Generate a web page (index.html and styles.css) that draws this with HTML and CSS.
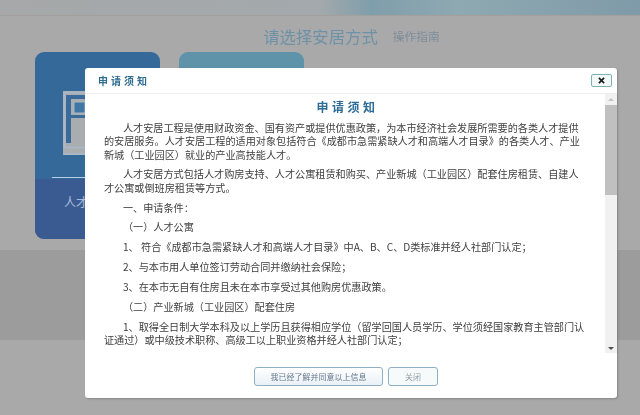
FILE: index.html
```html
<!DOCTYPE html>
<html lang="zh-CN">
<head>
<meta charset="utf-8">
<title>申请须知</title>
<link rel="stylesheet" href="styles.css">
</head>
<body>
<div class="page">
  <div class="banner"></div>
  <div class="heading">
    <h1 class="heading-title">请选择安居方式</h1>
    <a class="heading-link">操作指南</a>
  </div>
  <div class="cards">
    <div class="card card-primary">
      <div class="card-top">
        <svg class="card-icon" viewBox="0 0 62 64" aria-hidden="true">
          <path class="icon-line" d="M1.5 56V1.5H62M1 56.5H62M1 63H62" />
          <rect class="icon-dark" x="3" y="4" width="5" height="48"/>
          <rect class="icon-dark" x="3" y="4" width="59" height="4"/>
          <rect class="icon-dark" x="8" y="24" width="54" height="3"/>
          <rect class="icon-window" x="11" y="11" width="11" height="11"/>
        </svg>
        <span class="card-rule"></span>
      </div>
      <div class="card-foot">人才公寓</div>
    </div>
    <div class="card card-secondary"></div>
  </div>
  <div class="band"></div>
</div>

<div class="dialog">
  <div class="dialog-header">
    <span class="dialog-title">申请须知</span>
    <button class="dialog-close" aria-label="关闭">
      <svg viewBox="0 0 8 8" aria-hidden="true"><path d="M1 1L7 7M7 1L1 7"/></svg>
    </button>
  </div>
  <div class="dialog-scroll">
    <div class="dialog-body">
      <h2 class="body-title">申请须知</h2>
      <p class="indent">人才安居工程是使用财政资金、国有资产或提供优惠政策，为本市经济社会发展所需要的各类人才提供的安居服务。人才安居工程的适用对象包括符合《成都市急需紧缺人才和高端人才目录》的各类人才、产业新城（工业园区）就业的产业高技能人才。</p>
      <p class="indent">人才安居方式包括人才购房支持、人才公寓租赁和购买、产业新城（工业园区）配套住房租赁、自建人才公寓或倒班房租赁等方式。</p>
      <p class="indent">一、申请条件：</p>
      <p class="indent">（一）人才公寓</p>
      <p class="indent">1、 符合《成都市急需紧缺人才和高端人才目录》中A、B、C、D类标准并经人社部门认定；</p>
      <p class="indent">2、与本市用人单位签订劳动合同并缴纳社会保险；</p>
      <p class="indent">3、在本市无自有住房且未在本市享受过其他购房优惠政策。</p>
      <p class="indent">（二）产业新城（工业园区）配套住房</p>
      <p class="indent">1、取得全日制大学本科及以上学历且获得相应学位（留学回国人员学历、学位须经国家教育主管部门认证通过）或中级技术职称、高级工以上职业资格并经人社部门认定；</p>
    </div>
    <div class="scrollbar">
      <span class="arrow arrow-up"></span>
      <span class="thumb"></span>
      <span class="arrow arrow-down"></span>
    </div>
  </div>
  <div class="dialog-footer">
    <button class="btn btn-agree">我已经了解并同意以上信息</button>
    <button class="btn btn-close">关闭</button>
  </div>
</div>
</body>
</html>
```
FILE: styles.css
```css
* { box-sizing: border-box; }
html, body { margin: 0; padding: 0; }
body {
  width: 640px;
  height: 415px;
  overflow: hidden;
  position: relative;
  background: #a9a9a9;
  font-family: "Noto Sans CJK SC", "Liberation Sans", sans-serif;
}
.page { display: flex; flex-direction: column; height: 415px; filter: blur(.4px); }
.banner {
  height: 16px;
  background: linear-gradient(90deg, #a6a8a9 0%, #a3a9ac 50%, #7f9eab 58%, #8fa9b2 72%, #7f9aa8 100%);
  border-bottom: 1px solid #a29f9c;
}
.heading {
  display: flex;
  align-items: center;
  justify-content: center;
  gap: 15px;
  padding: 4px 0 0 63px;
  height: 36px;
}
.heading-title { margin: 0; font-size: 16.4px; line-height: 24px; font-weight: 400; color: #6d92a8; }
.heading-link { font-size: 11.75px; line-height: 24px; color: #7d8d9a; }
.cards { display: flex; gap: 19px; padding-left: 35px; }
.card { width: 125px; height: 187px; border-radius: 9px; overflow: hidden; display: flex; flex-direction: column; }
.card-primary { background: #35699a; }
.card-secondary { background: #5f93a9; }
.card-top { height: 127px; display: flex; flex-direction: column; align-items: flex-start; padding-top: 39px; }
.card-icon { width: 62px; height: 64px; margin-left: 28px; background: #a9adb0; flex: none; }
.icon-line { fill: none; stroke: #aab8c6; stroke-width: 2; }
.icon-dark { fill: #3a6c9b; }
.icon-window { fill: #3f76a4; stroke: #aab8c6; stroke-width: 1; }
.card-rule { width: 60px; height: 1px; background: #b9cfe6; margin: 22px 0 0 17px; flex: none; }
.card-foot { flex: 1; background: #3a5b92; color: #a9bcd8; font-size: 12px; padding: 14px 0 0 29px; }
.band { height: 90px; margin-top: 11px; background: #9c9c9c; }

.dialog {
  position: absolute;
  left: 85px;
  top: 68px;
  width: 532px;
  height: 330px;
  background: #fff;
  border-radius: 3px;
  box-shadow: 1px 1px 2px rgba(90, 90, 90, .45);
  display: flex;
  flex-direction: column;
  filter: blur(.3px);
}
.dialog-header {
  height: 26px;
  flex: none;
  display: flex;
  align-items: center;
  justify-content: space-between;
  padding: 0 5px 0 13px;
  border-bottom: 1px solid #eeeeee;
}
.dialog-title { font-size: 10px; font-weight: 700; letter-spacing: 3px; color: #2f6d90; }
.dialog-close {
  width: 21px;
  height: 13px;
  padding: 0;
  display: flex;
  align-items: center;
  justify-content: center;
  background: #f2f8f8;
  border: 1px solid #7fb0b4;
  border-radius: 2px;
}
.dialog-close svg { width: 7px; height: 7px; }
.dialog-close path { stroke: #1c1c1c; stroke-width: 2; fill: none; }
.dialog-scroll { height: 259px; flex: none; display: flex; }
.dialog-body { width: 520px; padding: 3px 18px 0 19px; overflow: hidden; font-size: 10.15px; line-height: 13.3px; color: #404040; }
.body-title {
  margin: 0 0 4px;
  padding-left: 4px;
  text-align: center;
  font-size: 12px;
  line-height: 20px;
  font-weight: 700;
  letter-spacing: 3.5px;
  color: #2d6c97;
}
.dialog-body p { margin: 0 0 6.55px; }
.indent { text-indent: 19px; }
.scrollbar { width: 12px; background: #f1f1f1; display: flex; flex-direction: column; align-items: center; }
.thumb { width: 100%; height: 90px; background: #c0c0c0; flex: none; }
.arrow { flex: none; width: 0; height: 0; border-left: 3px solid transparent; border-right: 3px solid transparent; }
.arrow-up { border-bottom: 3px solid #c4c4c4; margin: 4px 0 4px; }
.arrow-down { border-top: 3px solid #505050; margin-top: auto; margin-bottom: 3px; }
.dialog-footer { flex: 1; display: flex; justify-content: center; gap: 5px; padding: 14px 10px 0 0; align-items: flex-start; }
.btn {
  height: 19px;
  padding: 0;
  font-family: inherit;
  font-size: 8px;
  line-height: 1;
  color: #66788c;
  background: linear-gradient(#ffffff, #e9f0f6);
  border: 1px solid #8fb0c4;
  border-radius: 3px;
}
.btn-agree { width: 129px; }
.btn-close { width: 50px; background: #f7fafb; color: #8fa0a8; }
```
